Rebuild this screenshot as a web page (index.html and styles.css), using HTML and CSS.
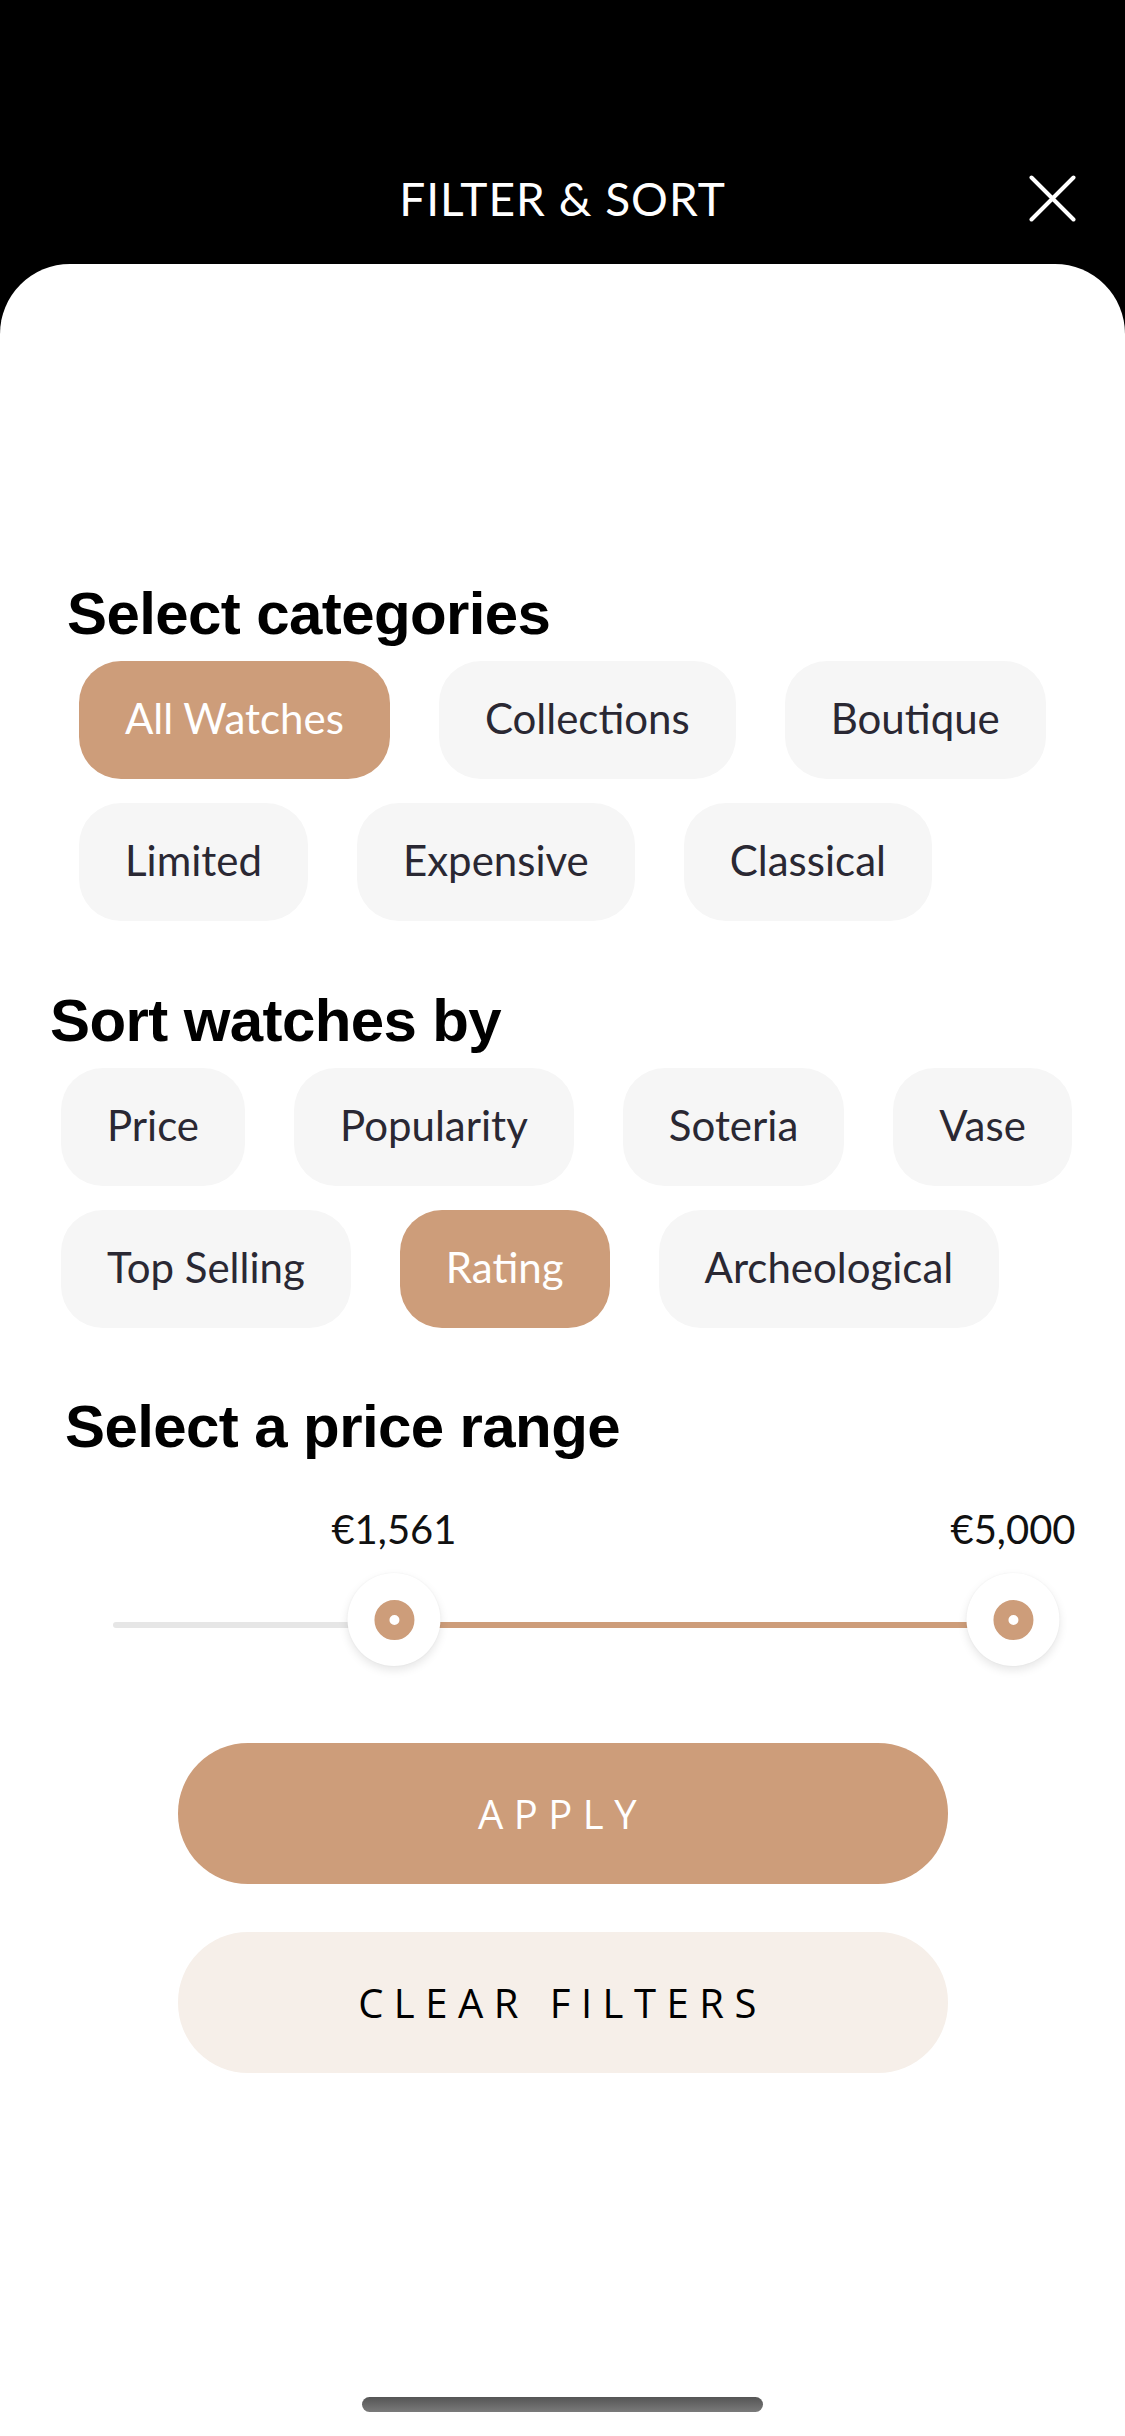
FILE: index.html
```html
<!DOCTYPE html>
<html lang="en">
<head>
<meta charset="utf-8">
<title>Filter &amp; Sort</title>
<link rel="stylesheet" href="styles.css">
</head>
<body>
<div class="screen">
  <header class="topbar">
    <span class="spacer"></span>
    <h1 class="title">FILTER &amp; SORT</h1>
    <button class="close" aria-label="Close">
      <svg viewBox="0 0 47 47" width="47" height="47"><path d="M2.5 2.5 L44.5 44.5 M44.5 2.5 L2.5 44.5" stroke="#fff" stroke-width="4" stroke-linecap="round" fill="none"/></svg>
    </button>
  </header>

  <main class="sheet">
    <section class="group group-categories">
      <h2 class="heading">Select categories</h2>
      <div class="chips">
        <div class="chip-row">
          <span class="chip chip-active">All Watches</span>
          <span class="chip">Collections</span>
          <span class="chip">Boutique</span>
        </div>
        <div class="chip-row">
          <span class="chip">Limited</span>
          <span class="chip">Expensive</span>
          <span class="chip">Classical</span>
        </div>
      </div>
    </section>

    <section class="group group-sort">
      <h2 class="heading">Sort watches by</h2>
      <div class="chips">
        <div class="chip-row">
          <span class="chip">Price</span>
          <span class="chip">Popularity</span>
          <span class="chip">Soteria</span>
          <span class="chip">Vase</span>
        </div>
        <div class="chip-row">
          <span class="chip">Top Selling</span>
          <span class="chip chip-active">Rating</span>
          <span class="chip">Archeological</span>
        </div>
      </div>
    </section>

    <section class="group group-price">
      <h2 class="heading">Select a price range</h2>
      <div class="range">
        <div class="track"></div>
        <div class="track-fill" style="left: 31.22%; right: 0%;"></div>
        <div class="handle" style="left: 31.22%;">
          <span class="handle-label">€1,561</span>
          <span class="thumb"><span class="thumb-dot"></span></span>
        </div>
        <div class="handle" style="left: 100%;">
          <span class="handle-label">€5,000</span>
          <span class="thumb"><span class="thumb-dot"></span></span>
        </div>
      </div>
    </section>

    <div class="actions">
      <button class="btn btn-apply">APPLY</button>
      <button class="btn btn-clear">CLEAR FILTERS</button>
    </div>

    <div class="home-indicator"></div>
  </main>
</div>
</body>
</html>
```

FILE: styles.css
```css
html, body {
  margin: 0;
  padding: 0;
  background: #000;
}

.screen {
  width: 1125px;
  height: 2436px;
  display: flex;
  flex-direction: column;
  background: #000;
  overflow: hidden;
}

/* Top bar */
.topbar {
  height: 264px;
  box-sizing: border-box;
  padding: 175px 49px 0 49px;
  display: grid;
  grid-template-columns: 1fr auto 1fr;
  align-items: start;
  flex-shrink: 0;
}

.title {
  margin: 0;
  font-family: Lato, "Noto Sans", sans-serif;
  font-weight: 400;
  font-size: 46px;
  line-height: 48px;
  letter-spacing: 1px;
  color: #fff;
}

.close {
  justify-self: end;
  width: 47px;
  height: 47px;
  padding: 0;
  border: 0;
  background: none;
  display: block;
}

.close svg {
  display: block;
}

/* Sheet */
.sheet {
  flex: 1;
  background: #fff;
  border-radius: 70px 70px 0 0;
  padding-top: 314px;
  display: flex;
  flex-direction: column;
}

.heading {
  margin: 0;
  font-family: "Liberation Sans", Arial, sans-serif;
  font-weight: 700;
  font-size: 60px;
  line-height: 72px;
  letter-spacing: -0.6px;
  color: #000;
}

.group-categories .heading { padding-left: 67px; }
.group-sort { margin-top: 64px; }
.group-sort .heading { padding-left: 50px; }
.group-price { margin-top: 63px; }
.group-price .heading { padding-left: 65px; }

.chips {
  margin-top: 11px;
  display: flex;
  flex-direction: column;
  gap: 24px;
}

.group-categories .chips { padding-left: 79px; }
.group-sort .chips { padding-left: 61px; }

.chip-row {
  display: flex;
  gap: 49px;
}

.chip {
  height: 118px;
  box-sizing: border-box;
  padding: 0 46px 5px;
  border-radius: 42px;
  background: #f6f6f6;
  display: flex;
  align-items: center;
  font-family: Lato, "Noto Sans", sans-serif;
  font-weight: 400;
  font-size: 42px;
  line-height: 1;
  color: #2a2833;
  white-space: nowrap;
}

.chip-active {
  background: #cd9d7a;
  color: #fff;
}

/* Range slider */
.range {
  position: relative;
  margin-top: 42px;
  margin-left: 113px;
  width: 900px;
  height: 161px;
}

.track {
  position: absolute;
  left: 0;
  right: 0;
  top: 117px;
  height: 6px;
  border-radius: 3px;
  background: #e6e6e6;
}

.track-fill {
  position: absolute;
  top: 117px;
  height: 6px;
  background: #cd9d7a;
}

.handle {
  position: absolute;
  top: 0;
  transform: translateX(-50%);
  display: flex;
  flex-direction: column;
  align-items: center;
  gap: 20px;
}

.handle-label {
  font-family: Lato, "Noto Sans", sans-serif;
  font-weight: 400;
  font-size: 40px;
  line-height: 48px;
  color: #111;
  white-space: nowrap;
}

.thumb {
  width: 93px;
  height: 93px;
  border-radius: 50%;
  background: #fff;
  box-shadow: 0 4px 10px rgba(0, 0, 0, 0.10), 0 0 2px rgba(0, 0, 0, 0.05);
  display: flex;
  align-items: center;
  justify-content: center;
}

.thumb-dot {
  width: 10px;
  height: 10px;
  border-radius: 50%;
  background: #fff;
  border: 15px solid #cd9d7a;
}

/* Buttons */
.actions {
  margin-top: 77px;
  display: flex;
  flex-direction: column;
  align-items: center;
  gap: 48px;
}

.btn {
  width: 770px;
  height: 141px;
  border: 0;
  border-radius: 70px;
  font-family: "Open Sans", "Noto Sans", sans-serif;
  font-size: 40px;
  letter-spacing: 10.5px;
  padding: 0;
  display: flex;
  align-items: center;
  justify-content: center;
}

.btn-apply {
  background: #cd9d7a;
  color: #fff;
  font-weight: 400;
}

.btn-clear {
  background: #f6efe9;
  color: #000;
  font-weight: 500;
}

.home-indicator {
  margin-top: auto;
  margin-bottom: 24px;
  align-self: center;
  width: 401px;
  height: 15px;
  border-radius: 8px;
  background: linear-gradient(180deg, #555 0%, #7a7a7a 100%);
}
```
